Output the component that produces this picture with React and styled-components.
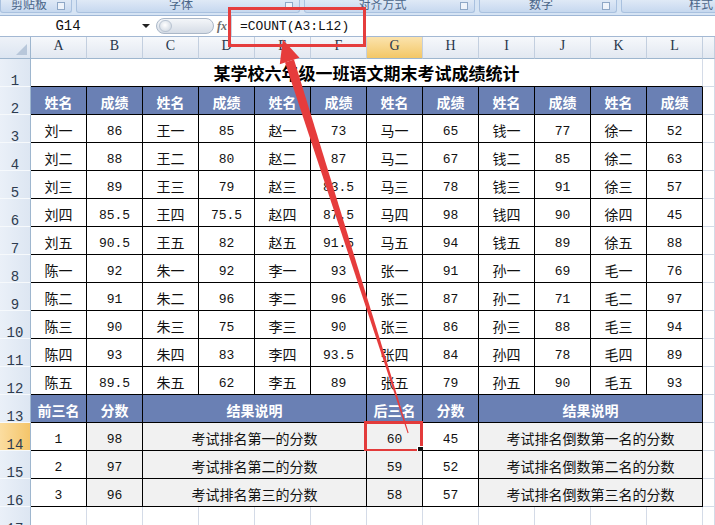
import React from "react"
import styled, { createGlobalStyle } from "styled-components"

const GlobalStyle = createGlobalStyle`
  html, body {
    margin: 0;
    padding: 0;
    background: #ffffff;
    overflow: hidden;
  }
  #root {
    width: 715px;
    height: 525px;
    position: relative;
    overflow: hidden;
  }
`

const CJK = `"Noto Sans CJK SC", "Noto Sans", sans-serif`
const MONO = `"Liberation Mono", "Noto Sans CJK SC", monospace`

const HEAD_FILL = "#6a80b4"
const GRAY_FILL = "#f1f1f1"
const GRID = "#d4dbe7"

// ---------- 功能区 ----------
const Ribbon = styled.div`
  display: flex;
  gap: 4px;
  height: 16px;
  background: #d6e4f4;
  border-bottom: 1px solid #9fb7d6;
  box-sizing: border-box;
  overflow: hidden;
`

const RibbonGroup = styled.div`
  position: relative;
  flex: 0 0 ${(p) => p.$w}px;
  height: 13px;
  box-sizing: border-box;
  padding-right: ${(p) => (p.$launcher ? 14 : 0)}px;
  background: linear-gradient(#dfe9f6, #c6d8ef);
  border: 1px solid #a9c1df;
  border-top: none;
  border-radius: 0 0 3px 3px;
  display: flex;
  justify-content: center;
  overflow: hidden;
`

const RibbonLabel = styled.span`
  font-family: ${CJK};
  font-size: 12px;
  line-height: 12px;
  margin-top: -2px;
  color: #4a6588;
`

const Launcher = styled.span`
  position: absolute;
  right: 6px;
  top: 2px;
  width: 6px;
  height: 6px;
  border: 1px solid #8ea7c6;
  background: #eef3fa;
`

// ---------- 编辑栏 ----------
const FormulaBar = styled.div`
  display: flex;
  align-items: center;
  height: 21px;
  background: #ffffff;
  border-bottom: 1px solid #a3b8d3;
  box-sizing: border-box;
`

const NameBox = styled.div`
  width: 136px;
  text-align: center;
  font-family: ${MONO};
  font-size: 14px;
  color: #111;
  box-sizing: border-box;
`

const DropArrow = styled.span`
  width: 0;
  height: 0;
  margin: 0 6px 0 6px;
  border-left: 4px solid transparent;
  border-right: 4px solid transparent;
  border-top: 4px solid #222;
`

const Pill = styled.div`
  position: relative;
  width: 58px;
  height: 16px;
  border-radius: 8px;
  border: 1px solid #aab7c8;
  background: linear-gradient(#f4f6f9, #d5dce6);
  box-sizing: border-box;

  &::before {
    content: "";
    position: absolute;
    left: 2px;
    top: 1px;
    width: 13px;
    height: 12px;
    border-radius: 6px;
    background: radial-gradient(circle at 45% 40%, #ffffff, #c8d1dd);
    border: 1px solid #b9c4d2;
    box-sizing: border-box;
  }
`

const Fx = styled.span`
  width: 14px;
  margin-left: 3px;
  font-family: "Liberation Serif", serif;
  font-style: italic;
  font-weight: bold;
  font-size: 12px;
  color: #6b6b6b;
`

const FormulaInput = styled.div`
  flex: 1;
  height: 100%;
  border-left: 1px solid #c9d4e2;
  padding-left: 8px;
  display: flex;
  align-items: center;
  font-family: ${MONO};
  font-size: 13px;
  color: #111;
`

// ---------- 工作表 ----------
const Sheet = styled.div`
  display: grid;
  grid-template-columns: 31px repeat(12, 56px) 1fr;
  grid-template-rows: 22px repeat(17, 28px);
`

const Corner = styled.div`
  position: relative;
  background: linear-gradient(#eef2f8, #dce5f1);
  border-right: 1px solid #9eb6ce;
  border-bottom: 1px solid #9eb6ce;

  &::after {
    content: "";
    position: absolute;
    right: 3px;
    bottom: 3px;
    border-left: 11px solid transparent;
    border-bottom: 11px solid #b8c7da;
  }
`

const ColHead = styled.div`
  display: flex;
  align-items: center;
  justify-content: center;
  padding-bottom: 3px;
  box-sizing: border-box;
  background: ${(p) =>
    p.$active ? "linear-gradient(#fbe3ad, #f3c766)" : "linear-gradient(#f6f8fb, #e2e8f1)"};
  border-right: 1px solid #c3cfdf;
  border-bottom: 1px solid #9eb6ce;
  font-family: "Liberation Serif", serif;
  font-size: 14px;
  color: #27364a;
`

const RowHead = styled.div`
  display: flex;
  align-items: flex-end;
  justify-content: center;
  line-height: 10px;
  box-sizing: border-box;
  background: ${(p) =>
    p.$active ? "linear-gradient(90deg, #fbdda0, #f4c56a)" : "linear-gradient(90deg, #eaf0f8, #dde6f2)"};
  border-right: 1px solid #9eb6ce;
  border-bottom: 1px solid #f6f9fc;
  font-family: ${MONO};
  font-size: 14px;
  color: #2d3b4f;
`

const Cell = styled.div`
  position: relative;
  grid-column: span ${(p) => p.$span || 1};
  display: flex;
  align-items: center;
  justify-content: center;
  padding-top: ${(p) => (p.$num ? 7 : 2)}px;
  box-sizing: border-box;
  background: ${(p) => p.$fill || "#ffffff"};
  border-right: 1px solid ${(p) => (p.$edge ? "#000" : GRID)};
  border-bottom: 1px solid ${(p) => (p.$edge || p.$under ? "#000" : GRID)};
  font-family: ${(p) => (p.$num ? MONO : CJK)};
  font-size: ${(p) => (p.$num ? 13 : 14)}px;
  line-height: 16px;
  font-weight: ${(p) => (p.$bold ? 700 : 400)};
  color: ${(p) => p.$color || "#111"};
  white-space: nowrap;
`

const Title = styled(Cell)`
  font-size: 17px;
  font-weight: 700;
  color: #000;
  padding-top: 0;
`

const Selection = styled.div`
  position: absolute;
  left: -3px;
  top: -2px;
  right: -1px;
  bottom: -2px;
  border: 3px solid #e33b3b;
  pointer-events: none;

  &::after {
    content: "";
    position: absolute;
    right: -4px;
    bottom: -4px;
    width: 5px;
    height: 5px;
    background: #111;
    border: 1px solid #fff;
  }
`

const FormulaMark = styled.div`
  position: absolute;
  left: 228px;
  top: 7px;
  width: 138px;
  height: 40px;
  border: 3px solid #e53d3d;
  box-sizing: border-box;
  pointer-events: none;
`

const ArrowLayer = styled.svg`
  position: absolute;
  left: 0;
  top: 0;
  pointer-events: none;
`

const letters = ["A", "B", "C", "D", "E", "F", "G", "H", "I", "J", "K", "L"]
const ribbonGroups = [
  { label: "剪贴板", w: 72, launcher: true },
  { label: "字体", w: 224, launcher: true },
  { label: "对齐方式", w: 171, launcher: true },
  { label: "数字", w: 138, launcher: true },
  { label: "样式", w: 160 },
]

const scores = [
  ["刘一", "86", "王一", "85", "赵一", "73", "马一", "65", "钱一", "77", "徐一", "52"],
  ["刘二", "88", "王二", "80", "赵二", "87", "马二", "67", "钱二", "85", "徐二", "63"],
  ["刘三", "89", "王三", "79", "赵三", "83.5", "马三", "78", "钱三", "91", "徐三", "57"],
  ["刘四", "85.5", "王四", "75.5", "赵四", "87.5", "马四", "98", "钱四", "90", "徐四", "45"],
  ["刘五", "90.5", "王五", "82", "赵五", "91.5", "马五", "94", "钱五", "89", "徐五", "88"],
  ["陈一", "92", "朱一", "92", "李一", "93", "张一", "91", "孙一", "69", "毛一", "76"],
  ["陈二", "91", "朱二", "96", "李二", "96", "张二", "87", "孙二", "71", "毛二", "97"],
  ["陈三", "90", "朱三", "75", "李三", "90", "张三", "86", "孙三", "88", "毛三", "94"],
  ["陈四", "93", "朱四", "83", "李四", "93.5", "张四", "84", "孙四", "78", "毛四", "89"],
  ["陈五", "89.5", "朱五", "62", "李五", "89", "张五", "79", "孙五", "90", "毛五", "93"],
]

const summary = [
  ["1", "98", "考试排名第一的分数", "60", "45", "考试排名倒数第一名的分数"],
  ["2", "97", "考试排名第二的分数", "59", "52", "考试排名倒数第二名的分数"],
  ["3", "96", "考试排名第三的分数", "58", "57", "考试排名倒数第三名的分数"],
]

const HeadCell = ({ children, span }) => (
  <Cell $edge $span={span} $fill={HEAD_FILL} $color="#ffffff" $bold>
    {children}
  </Cell>
)

const Blank = () => <Cell />

export default function App() {
  return (
    <>
      <GlobalStyle />
      <Ribbon>
        {ribbonGroups.map((g) => (
          <RibbonGroup key={g.label} $w={g.w} $launcher={g.launcher}>
            <RibbonLabel>{g.label}</RibbonLabel>
            {g.launcher && <Launcher />}
          </RibbonGroup>
        ))}
      </Ribbon>

      <FormulaBar>
        <NameBox>G14</NameBox>
        <DropArrow />
        <Pill />
        <Fx>fx</Fx>
        <FormulaInput>=COUNT(A3:L12)</FormulaInput>
      </FormulaBar>

      <Sheet>
        <Corner />
        {letters.map((l) => (
          <ColHead key={l} $active={l === "G"}>
            {l}
          </ColHead>
        ))}
        <ColHead />

        {/* 1 标题 */}
        <RowHead>1</RowHead>
        <Title $span={12} $under>
          某学校六年级一班语文期末考试成绩统计
        </Title>
        <Blank />

        {/* 2 表头 */}
        <RowHead>2</RowHead>
        {letters.map((l, i) => (
          <HeadCell key={l}>{i % 2 === 0 ? "姓名" : "成绩"}</HeadCell>
        ))}
        <Blank />

        {/* 3-12 成绩 */}
        {scores.map((row, r) => (
          <React.Fragment key={r}>
            <RowHead>{r + 3}</RowHead>
            {row.map((v, i) => (
              <Cell key={i} $edge $num={i % 2 === 1}>
                {v}
              </Cell>
            ))}
            <Blank />
          </React.Fragment>
        ))}

        {/* 13 汇总表头 */}
        <RowHead>13</RowHead>
        <HeadCell>前三名</HeadCell>
        <HeadCell>分数</HeadCell>
        <HeadCell span={4}>结果说明</HeadCell>
        <HeadCell>后三名</HeadCell>
        <HeadCell>分数</HeadCell>
        <HeadCell span={4}>结果说明</HeadCell>
        <Blank />

        {/* 14-16 汇总 */}
        {summary.map((row, r) => (
          <React.Fragment key={r}>
            <RowHead $active={r === 0}>{r + 14}</RowHead>
            <Cell $edge $num>
              {row[0]}
            </Cell>
            <Cell $edge $num $fill={GRAY_FILL}>
              {row[1]}
            </Cell>
            <Cell $edge $span={4} $fill={GRAY_FILL}>
              {row[2]}
            </Cell>
            <Cell $edge $num $fill={GRAY_FILL}>
              {row[3]}
              {r === 0 && <Selection />}
            </Cell>
            <Cell $edge $num>
              {row[4]}
            </Cell>
            <Cell $edge $span={4} $fill={GRAY_FILL}>
              {row[5]}
            </Cell>
            <Blank />
          </React.Fragment>
        ))}

        {/* 17 空行 */}
        <RowHead>17</RowHead>
        {letters.map((l) => (
          <Blank key={l} />
        ))}
        <Blank />
      </Sheet>

      <FormulaMark />
      <ArrowLayer width="715" height="525" viewBox="0 0 715 525">
        <polygon points="294,59.6 285,62.4 407.6,433.2 408.6,432.8" fill="#e63c3c" />
        <polygon points="282.8,39.5 299.5,57.8 279.8,64.2" fill="#e63c3c" />
      </ArrowLayer>
    </>
  )
}
